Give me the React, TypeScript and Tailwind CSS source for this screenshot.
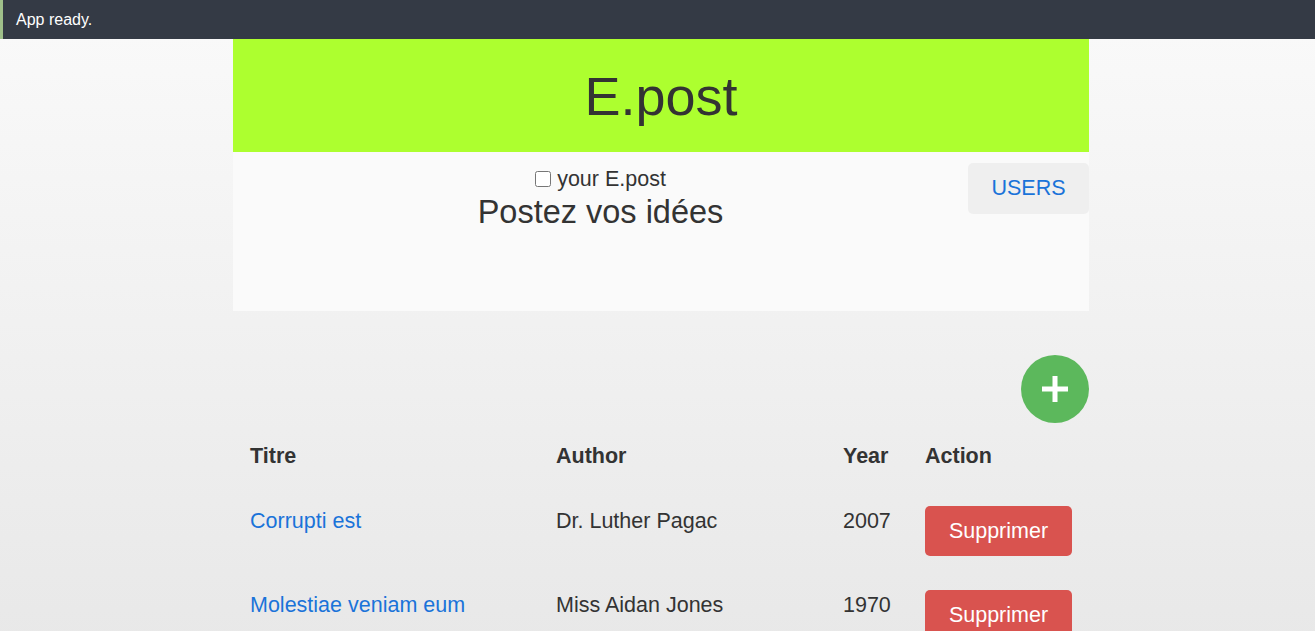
const posts = [
  { title: 'Corrupti est', author: 'Dr. Luther Pagac', year: 2007 },
  { title: 'Molestiae veniam eum', author: 'Miss Aidan Jones', year: 1970 },
];

const App = () => {
  return (
    <div className="min-h-screen bg-gradient-to-b from-[#fafafa] to-[#e8e8e8] font-['Liberation_Sans',Arial,sans-serif] text-[#333]">
      <div className="h-[39px] bg-[#343a45] border-l-[3px] border-[#9fbf8a] pl-[13px] flex items-center text-[16px] text-white">
        App ready.
      </div>

      <div className="flex justify-center pl-[7px]">
        <div className="w-[856px]">
          <header className="h-[113px] bg-[#adff2f] flex items-center justify-center">
            <h1 className="text-[54px] leading-none">E.post</h1>
          </header>

          <section className="h-[159px] bg-[#fafafa] flex">
            <div className="flex-1 flex flex-col items-center pt-[14px]">
              <label className="flex items-center gap-[6px] text-[21.5px] leading-[26px]">
                <input type="checkbox" className="w-[16px] h-[16px] accent-[#555]" />
                your E.post
              </label>
              <h2 className="text-[32.5px] leading-[38px] mt-[1px]">Postez vos idées</h2>
            </div>
            <div className="pt-[11px]">
              <button className="w-[121px] h-[51px] rounded-[5px] bg-[#efefef] text-[#1a73d9] text-[21.5px]">
                USERS
              </button>
            </div>
          </section>

          <div className="flex justify-end mt-[44px]">
            <button className="w-[68px] h-[68px] rounded-full bg-[#5cb85c] flex items-center justify-center">
              <svg width="28" height="28" viewBox="0 0 28 28">
                <rect x="11.5" y="1" width="5" height="26" fill="#fff" />
                <rect x="1" y="11.5" width="26" height="5" fill="#fff" />
              </svg>
            </button>
          </div>

          <div className="text-[21.5px] leading-[31px] mt-[10px]">
            <div className="grid grid-cols-[17px_306px_287px_82px_1fr] h-[46px] items-center font-bold">
              <span />
              <span>Titre</span>
              <span>Author</span>
              <span>Year</span>
              <span>Action</span>
            </div>
            {posts.map((p) => (
              <div key={p.title} className="grid grid-cols-[17px_306px_287px_82px_1fr] h-[84px] items-start pt-[27px]">
                <span />
                <a href="#" className="text-[#1a73d9]">{p.title}</a>
                <span>{p.author}</span>
                <span>{p.year}</span>
                <div>
                  <button className="w-[147px] h-[50px] rounded-[5px] bg-[#d9534f] text-white text-[21.5px]">
                    Supprimer
                  </button>
                </div>
              </div>
            ))}
          </div>
        </div>
      </div>
    </div>
  );
};

export default App;
